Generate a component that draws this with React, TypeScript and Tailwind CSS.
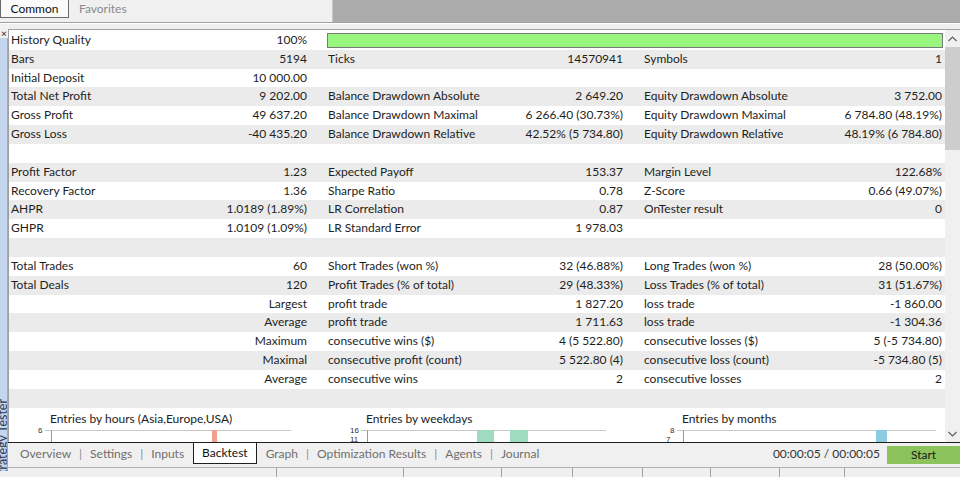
import React from 'react';

type Row = [string, string, string, string, string, string] | null;

const rows: Row[] = [
  ['History Quality', '100%', '', '', '', ''],
  ['Bars', '5194', 'Ticks', '14570941', 'Symbols', '1'],
  ['Initial Deposit', '10 000.00', '', '', '', ''],
  ['Total Net Profit', '9 202.00', 'Balance Drawdown Absolute', '2 649.20', 'Equity Drawdown Absolute', '3 752.00'],
  ['Gross Profit', '49 637.20', 'Balance Drawdown Maximal', '6 266.40 (30.73%)', 'Equity Drawdown Maximal', '6 784.80 (48.19%)'],
  ['Gross Loss', '-40 435.20', 'Balance Drawdown Relative', '42.52% (5 734.80)', 'Equity Drawdown Relative', '48.19% (6 784.80)'],
  null,
  ['Profit Factor', '1.23', 'Expected Payoff', '153.37', 'Margin Level', '122.68%'],
  ['Recovery Factor', '1.36', 'Sharpe Ratio', '0.78', 'Z-Score', '0.66 (49.07%)'],
  ['AHPR', '1.0189 (1.89%)', 'LR Correlation', '0.87', 'OnTester result', '0'],
  ['GHPR', '1.0109 (1.09%)', 'LR Standard Error', '1 978.03', '', ''],
  null,
  ['Total Trades', '60', 'Short Trades (won %)', '32 (46.88%)', 'Long Trades (won %)', '28 (50.00%)'],
  ['Total Deals', '120', 'Profit Trades (% of total)', '29 (48.33%)', 'Loss Trades (% of total)', '31 (51.67%)'],
  ['', 'Largest', 'profit trade', '1 827.20', 'loss trade', '-1 860.00'],
  ['', 'Average', 'profit trade', '1 711.63', 'loss trade', '-1 304.36'],
  ['', 'Maximum', 'consecutive wins ($)', '4 (5 522.80)', 'consecutive losses ($)', '5 (-5 734.80)'],
  ['', 'Maximal', 'consecutive profit (count)', '5 522.80 (4)', 'consecutive loss (count)', '-5 734.80 (5)'],
  ['', 'Average', 'consecutive wins', '2', 'consecutive losses', '2'],
  null,
];

const tabs = ['Overview', 'Settings', 'Inputs', 'Backtest', 'Graph', 'Optimization Results', 'Agents', 'Journal'];

function Chart({ title, label, bars, color, lineEnd, second }: { title: string; label: string; bars: [number, number][]; color: string; lineEnd: number; second?: string }) {
  return (
    <div className="w-[316px] shrink-0">
      <div className="pl-[41px] h-[15px] leading-[15px] text-[12px] text-[#222]">{title}</div>
      <svg width="316" height="20" className="block">
        <text x={label.length > 1 ? 25 : 29} y="7" fontSize="8" fill="#333" fontFamily="Liberation Sans, sans-serif">{label}</text>
        <line x1="36" y1="4.5" x2={lineEnd} y2="4.5" stroke="#c8c8c8" strokeWidth="1" />
        <line x1="42.5" y1="4.5" x2="42.5" y2="20" stroke="#999" strokeWidth="1" />
        {bars.map(([a, b], i) => (
          <rect key={i} x={a} y="4" width={b - a} height="16" fill={color} />
        ))}
        {second && <text x="25" y="16" fontSize="8" fill="#333" fontFamily="Liberation Sans, sans-serif">{second}</text>}
      </svg>
    </div>
  );
}

export default function App() {
  return (
    <div className="w-[960px] h-[477px] overflow-hidden bg-[#f0f0f0] text-[#1e1e1e] font-['Lato','Liberation_Sans',sans-serif] text-[12px]">
      {/* top tab strip */}
      <div className="h-[23px] flex border-b border-[#a0a0a0]">
        <div className="w-[333px] flex items-start bg-[#f0f0f0] border-r border-[#c8c8c8]">
          <div className="h-[18px] w-[69px] bg-[#fafafa] border-x border-b border-[#6a6a6a] flex items-center justify-center text-[#111]">Common</div>
          <div className="h-[18px] pl-[10px] flex items-center text-[#8a8a8a]">Favorites</div>
        </div>
        <div className="flex-1 bg-[#ababab]" />
      </div>
      <div className="h-[1px] bg-white" />
      <div className="h-[5px]" />

      <div className="flex h-[448px]">
        {/* left docked strip */}
        <div className="w-[8px] shrink-0 flex flex-col items-center">
          <div className="h-[8px] text-[10px] leading-[8px] text-[#222]">×</div>
          <div className="flex-1 w-[8px] mt-[1px] mb-[6px] bg-[#c3d6ee] border-r border-[#8eadd4] flex flex-col justify-end items-start overflow-hidden">
            <div className="[writing-mode:vertical-rl] rotate-180 text-[12.5px] leading-[12px] -ml-[3px] text-[#2a3a55] mb-[-10px] whitespace-nowrap">Strategy Tester</div>
          </div>
        </div>

        <div className="flex-1 min-w-0 flex flex-col">
          {/* report panel */}
          <div className="h-[413px] shrink-0 flex border-t border-l border-[#a0a0a0] bg-white">
            <div className="flex-1 min-w-0 overflow-hidden pt-[1px]">
              {rows.map((r, i) => (
                <div key={i} className={`h-[18.83px] leading-[18.83px] grid grid-cols-[316px_316px_1fr] whitespace-nowrap ${i % 2 === 1 ? 'bg-[#ebebeb]' : 'bg-white'}`}>
                  {r === null ? null : i === 0 ? (
                    <>
                      <div className="flex justify-between pl-[2px] pr-[18px]"><span>{r[0]}</span><span>{r[1]}</span></div>
                      <div className="col-span-2 pl-[2px] pr-[2px] py-[1.5px]">
                        <div className="h-full bg-[#98f57e] border border-[#7a7a7a]" />
                      </div>
                    </>
                  ) : (
                    <>
                      <div className="flex justify-between pl-[2px] pr-[18px]"><span>{r[0]}</span><span>{r[1]}</span></div>
                      <div className="flex justify-between pl-[3px] pr-[18px]"><span>{r[2]}</span><span>{r[3]}</span></div>
                      <div className="flex justify-between pl-[3px] pr-[3px]"><span>{r[4]}</span><span>{r[5]}</span></div>
                    </>
                  )}
                </div>
              ))}
              <div className="flex pt-[3px]">
                <Chart title="Entries by hours (Asia,Europe,USA)" label="6" bars={[[203, 208]]} color="#f2a08e" lineEnd={282} />
                <Chart title="Entries by weekdays" label="16" bars={[[152, 169], [185, 203]]} color="#9fdbbf" lineEnd={281} second="11" />
                <Chart title="Entries by months" label="8" bars={[[235, 246]]} color="#8ccbe2" lineEnd={295} second="7" />
              </div>
            </div>
            {/* scrollbar */}
            <div className="w-[15px] shrink-0 bg-[#f0f0f0] flex flex-col items-center">
              <div className="h-[17px] flex items-center">
                <svg width="9" height="6" viewBox="0 0 9 6"><path d="M0.5 5 L4.5 1 L8.5 5" stroke="#606060" strokeWidth="1.2" fill="none" /></svg>
              </div>
              <div className="w-[15px] h-[103px] bg-[#cdcdcd]" />
              <div className="flex-1" />
              <div className="h-[17px] flex items-center">
                <svg width="9" height="6" viewBox="0 0 9 6"><path d="M0.5 1 L4.5 5 L8.5 1" stroke="#606060" strokeWidth="1.2" fill="none" /></svg>
              </div>
            </div>
          </div>

          {/* bottom tabs */}
          <div className="h-[21px] shrink-0 flex items-start border-t border-[#1e1e1e] bg-[#f0f0f0] whitespace-nowrap">
            <div className="flex items-center h-[21px] pl-[4px]">
              {tabs.map((t, i) => (
                <React.Fragment key={t}>
                  {t === 'Backtest' ? (
                    <div className="h-[21px] -mt-[1px] mx-[1px] px-[8px] bg-white border-x border-b border-[#1e1e1e] flex items-center text-[#111]">{t}</div>
                  ) : (
                    <div className="px-[8px] text-[#6e6e6e]">{t}</div>
                  )}
                  {i < tabs.length - 1 && t !== 'Inputs' && t !== 'Backtest' && <div className="text-[#8a8a8a]">|</div>}
                </React.Fragment>
              ))}
            </div>
            <div className="flex-1" />
            <div className="h-[21px] flex items-center pr-[7px] text-[#333]">00:00:05 / 00:00:05</div>
            <div className="w-[73px] shrink-0 h-[18px] mt-[3px] bg-[#8cc35c] flex items-center justify-center text-[#1a1a1a]">Start</div>
          </div>
          <div className="h-[4px] shrink-0" />
          {/* status bar */}
          <div className="flex-1 border-t border-[#b0b0b0] flex">
            <div className="w-[269px] border-r border-[#a0a0a0]" />
            <div className="w-[127px] border-r border-[#a0a0a0]" />
            <div className="w-[98px] border-r border-[#a0a0a0]" />
            <div className="w-[71px] border-r border-[#a0a0a0]" />
            <div className="w-[70px] border-r border-[#a0a0a0]" />
            <div className="w-[68px] border-r border-[#a0a0a0]" />
            <div className="w-[69px] border-r border-[#a0a0a0]" />
            <div className="w-[65px] border-r border-[#a0a0a0]" />
          </div>
        </div>
      </div>
    </div>
  );
}
